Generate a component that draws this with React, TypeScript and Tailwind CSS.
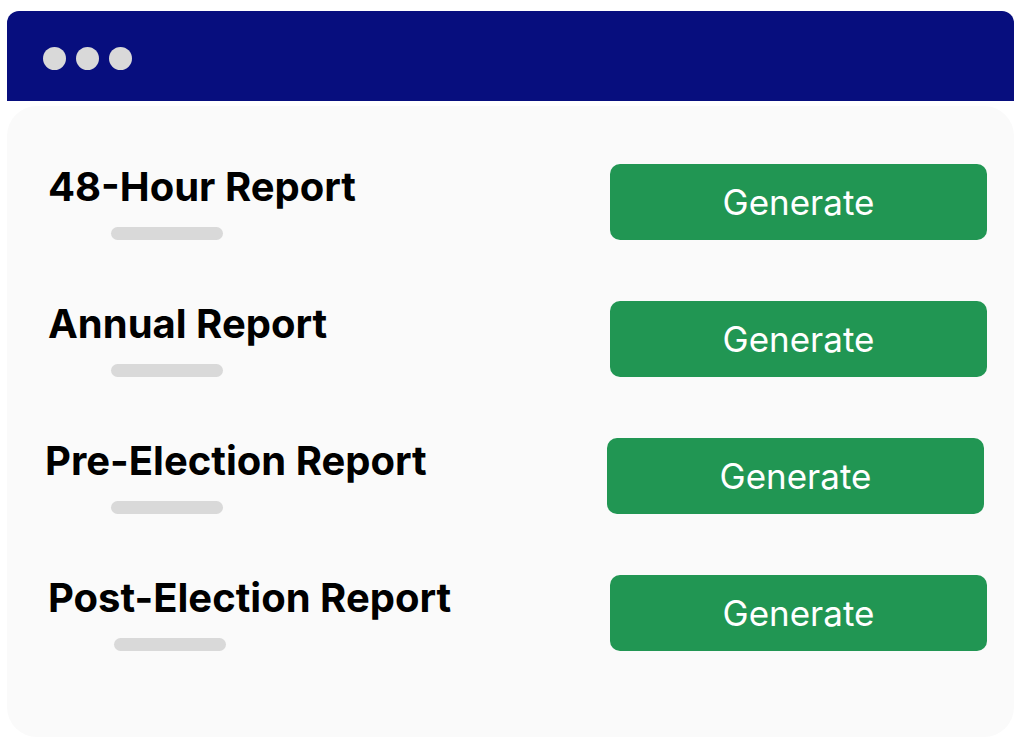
import React from 'react';

type Row = {
  title: string;
  rowClass: string;
  barClass: string;
};

const rows: Row[] = [
  { title: '48-Hour Report', rowClass: 'pl-[41px] pr-[27px]', barClass: 'ml-[63px]' },
  { title: 'Annual Report', rowClass: 'pl-[41px] pr-[27px]', barClass: 'ml-[63px]' },
  { title: 'Pre-Election Report', rowClass: 'pl-[38px] pr-[30px]', barClass: 'ml-[66px]' },
  { title: 'Post-Election Report', rowClass: 'pl-[41px] pr-[27px]', barClass: 'ml-[66px]' },
];

const ReportRow = ({ row }: { row: Row }) => (
  <div className={`flex h-[76px] items-start justify-between ${row.rowClass}`}>
    <div className="flex flex-col">
      <h2 className="mt-[3px] text-[40px] leading-none font-bold text-black">{row.title}</h2>
      <div className={`mt-[20px] h-[13px] w-[112px] rounded-full bg-[#d9d9d9] ${row.barClass}`} />
    </div>
    <button className="h-[76px] w-[377px] rounded-[10px] bg-[#219653] text-[35px] text-white">
      Generate
    </button>
  </div>
);

const App: React.FC = () => {
  return (
    <div className="h-[752px] w-[1024px] bg-white pl-[7px] pr-[10px] pt-[11px]" style={{ fontFamily: 'Inter, "Noto Sans", sans-serif' }}>
      <div className="flex h-[90px] items-center gap-[10px] rounded-t-[12px] bg-[#070e7e] pl-[36px] pt-[5px]">
        <span className="h-[23px] w-[23px] rounded-full bg-[#d9d9d9]" />
        <span className="h-[23px] w-[23px] rounded-full bg-[#d9d9d9]" />
        <span className="h-[23px] w-[23px] rounded-full bg-[#d9d9d9]" />
      </div>
      <div className="mt-[5px] flex h-[631px] flex-col gap-[61px] rounded-[30px] bg-[#fafafa] pt-[58px]">
        {rows.map((row) => (
          <ReportRow key={row.title} row={row} />
        ))}
      </div>
    </div>
  );
};

export default App;
